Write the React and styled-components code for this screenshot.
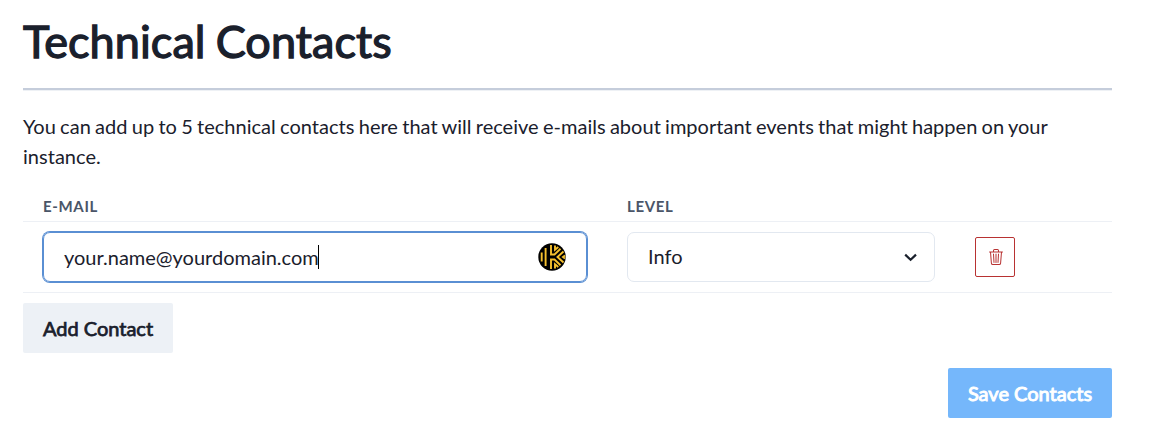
import React from "react";
import styled, { createGlobalStyle } from "styled-components";
import { BsTrash3 } from "react-icons/bs";

const GlobalStyle = createGlobalStyle`
  *, *::before, *::after { box-sizing: border-box; }
  body {
    margin: 0;
    background: #fff;
    color: #1a202c;
    font-family: Lato, "Liberation Sans", sans-serif;
    font-size: 20px;
    line-height: 30px;
  }
`;

const Page = styled.main`
  display: flex;
  flex-direction: column;
  width: 1112px;
  padding: 14px 0 0 23px;
`;

const Title = styled.h1`
  margin: 0;
  height: 74px;
  font-size: 45px;
  line-height: 54px;
  font-weight: 400;
  -webkit-text-stroke: 1.3px currentColor;
  letter-spacing: 0.08px;
  word-spacing: -1.5px;
`;

const Rule = styled.hr`
  width: 100%;
  height: 3px;
  margin: 0;
  border: 0;
  border-top: 2px solid #c5cddb;
  border-bottom: 1px solid #eef1f5;
`;

const Intro = styled.p`
  margin: 20px 0 21px;
  word-spacing: -0.9px;
  letter-spacing: 0.025px;
`;

const Row = styled.div`
  display: grid;
  grid-template-columns: 584px 348px 1fr;
  align-items: center;
  height: ${(p) => (p.$head ? "30px" : "71px")};
  padding-left: 20px;
  padding-bottom: ${(p) => (p.$head ? "2px" : "0")};
  border-bottom: 1px solid #edf0f5;
`;

const HeadCell = styled.span`
  font-size: 15px;
  line-height: 20px;
  font-weight: 700;
  letter-spacing: 0.65px;
  text-transform: uppercase;
  color: #4a5568;
`;

const Field = styled.div`
  display: flex;
  align-items: center;
  justify-content: space-between;
  width: ${(p) => p.$width}px;
  height: 50px;
  padding: 0 ${(p) => p.$right}px 0 20px;
  border: 1px solid ${(p) => (p.$focused ? "#5a8fd3" : "#e2e8f0")};
  border-radius: 7px;
  box-shadow: ${(p) => (p.$focused ? "0 0 0 1px #5a8fd3" : "none")};
`;

const Value = styled.span`
  display: flex;
  align-items: center;
  padding-bottom: ${(p) => (p.$raised ? "2px" : "0")};
`;

const Caret = styled.i`
  width: 1px;
  height: 24px;
  margin-left: -1px;
  background: #000;
`;

const DeleteButton = styled.button`
  display: flex;
  align-items: center;
  justify-content: center;
  width: 40px;
  height: 40px;
  padding: 0 0 0 1px;
  border: 1px solid #b83232;
  border-radius: 2px;
  background: transparent;
  color: #b83232;
`;

const Button = styled.button`
  align-self: ${(p) => (p.$primary ? "flex-end" : "flex-start")};
  width: ${(p) => (p.$primary ? 164 : 150)}px;
  height: 50px;
  margin: ${(p) => (p.$primary ? "15px 0 0" : "10px 0 0")};
  padding: 0;
  border: 0;
  border-radius: 2px;
  font: inherit;
  -webkit-text-stroke: ${(p) => (p.$primary ? 0.95 : 0.75)}px currentColor;
  background: ${(p) => (p.$primary ? "#75b7fb" : "#edf1f6")};
  color: ${(p) => (p.$primary ? "#fff" : "#1a202c")};
`;

const KeeperIcon = () => (
  <svg width="28" height="28" viewBox="0 0 28 28" fill="none" stroke="#f5c02e" strokeWidth="1.9">
    <circle cx="14" cy="14" r="13.7" fill="#000" stroke="none" />
    <path d="M3.7 9.5v9M7.6 5v18M13 2v9.5h3.5L22.5 5.8M13 26v-9.5h3.5l6 5.7M17 2.5v4.3l3.3-2.7M17 25.5v-4.3l3.3 2.7M25.5 8.5L19.5 14l6 5.5M27 12.5L25 14l2 1.5" />
  </svg>
);

const Chevron = () => (
  <svg width="14" height="10" viewBox="0 0 14 10" fill="none" stroke="#1a202c" strokeWidth="2.2">
    <path d="M1.2 2.6l5.4 5.2L12 2.6" />
  </svg>
);

export default function App() {
  return (
    <>
      <GlobalStyle />
      <Page>
        <Title>Technical Contacts</Title>
        <Rule />
        <Intro>
          You can add up to 5 technical contacts here that will receive e-mails about important
          events that might happen on your instance.
        </Intro>
        <Row $head>
          <HeadCell>E-mail</HeadCell>
          <HeadCell>Level</HeadCell>
        </Row>
        <Row>
          <Field $width={544} $right={20} $focused>
            <Value>
              your.name@yourdomain.com
              <Caret />
            </Value>
            <KeeperIcon />
          </Field>
          <Field $width={308} $right={16}>
            <Value $raised>Info</Value>
            <Chevron />
          </Field>
          <DeleteButton aria-label="Delete contact">
            <BsTrash3 size={16} />
          </DeleteButton>
        </Row>
        <Button>Add Contact</Button>
        <Button $primary>Save Contacts</Button>
      </Page>
    </>
  );
}
